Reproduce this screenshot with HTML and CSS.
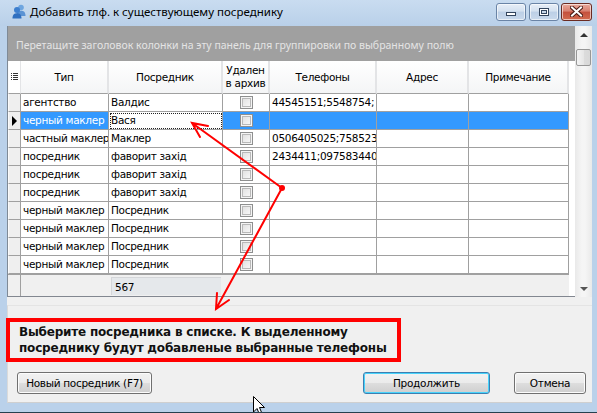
FILE: index.html
```html
<!DOCTYPE html>
<html lang="ru">
  <head>
    <meta charset="UTF-8" />
    <title>Добавить тлф. к существующему посреднику</title>
    <link rel="stylesheet" href="styles.css">
  </head>
  <body>
    <div class="window">
      <div class="titlebar">
        <svg class="title-icon" width="14" height="15" viewBox="0 0 14 15">
          <circle cx="9" cy="3.5" r="2.8" fill="#6fa6e0" />
          <path d="M4.5 12 C4.5 8 6.5 6.8 9 6.8 C11.5 6.8 13.5 8 13.5 12 Z" fill="#5b93d4" />
          <circle cx="5" cy="6" r="3" fill="#3d7fcf" />
          <path d="M0.5 14.5 C0.5 10.5 2.5 9.3 5 9.3 C7.5 9.3 9.5 10.5 9.5 14.5 Z" fill="#2f6fc0" />
        </svg>
        <div class="title">Добавить тлф. к существующему посреднику</div>
        <div class="caption-btn">
          <span class="glyph-min"></span>
        </div>
        <div class="caption-btn">
          <span class="glyph-max"></span>
        </div>
        <div class="caption-btn close">
          <svg width="13" height="11" viewBox="0 0 13 11">
            <path d="M2 1.5 L11 9.5 M11 1.5 L2 9.5" stroke="#4a1a14" stroke-width="4" stroke-linecap="square" />
            <path d="M2 1.5 L11 9.5 M11 1.5 L2 9.5" stroke="#fff" stroke-width="2" stroke-linecap="square" />
          </svg>
        </div>
      </div>

      <div class="client">
        <div class="grid-wrap">
          <div class="grid">
            <div class="group-panel">Перетащите заголовок колонки на эту панель для группировки по выбранному полю</div>

            <div class="row head">
              <div class="cell ind">
                <svg width="7" height="8" viewBox="0 0 7 8">
                  <rect x="0" y="0" width="1" height="1" fill="#333" />
                  <rect x="2" y="0" width="5" height="1" fill="#333" />
                  <rect x="0" y="2" width="1" height="1" fill="#333" />
                  <rect x="2" y="2" width="5" height="1" fill="#333" />
                  <rect x="0" y="4" width="1" height="1" fill="#333" />
                  <rect x="2" y="4" width="5" height="1" fill="#333" />
                  <rect x="0" y="6" width="1" height="1" fill="#333" />
                  <rect x="2" y="6" width="5" height="1" fill="#333" />
                </svg>
              </div>
              <div class="cell">Тип</div>
              <div class="cell">Посредник</div>
              <div class="cell">Удален<br>в архив</div>
              <div class="cell">Телефоны</div>
              <div class="cell">Адрес</div>
              <div class="cell">Примечание</div>
            </div>

            <div class="row">
              <div class="cell ind"></div>
              <div class="cell">агентство</div>
              <div class="cell">Валдис</div>
              <div class="cell chk"><span class="box"></span></div>
              <div class="cell">44545151;5548754;</div>
              <div class="cell"></div>
              <div class="cell"></div>
            </div>
            <div class="row selected">
              <div class="cell ind"><span class="pointer"></span></div>
              <div class="cell">черный маклер</div>
              <div class="cell focus">Вася</div>
              <div class="cell chk"><span class="box"></span></div>
              <div class="cell"></div>
              <div class="cell"></div>
              <div class="cell"></div>
            </div>
            <div class="row">
              <div class="cell ind"></div>
              <div class="cell">частный маклер</div>
              <div class="cell">Маклер</div>
              <div class="cell chk"><span class="box"></span></div>
              <div class="cell">0506405025;7585234</div>
              <div class="cell"></div>
              <div class="cell"></div>
            </div>
            <div class="row">
              <div class="cell ind"></div>
              <div class="cell">посредник</div>
              <div class="cell">фаворит захід</div>
              <div class="cell chk"><span class="box"></span></div>
              <div class="cell">2434411;0975834408</div>
              <div class="cell"></div>
              <div class="cell"></div>
            </div>
            <div class="row">
              <div class="cell ind"></div>
              <div class="cell">посредник</div>
              <div class="cell">фаворит захід</div>
              <div class="cell chk"><span class="box"></span></div>
              <div class="cell"></div>
              <div class="cell"></div>
              <div class="cell"></div>
            </div>
            <div class="row">
              <div class="cell ind"></div>
              <div class="cell">посредник</div>
              <div class="cell">фаворит захід</div>
              <div class="cell chk"><span class="box"></span></div>
              <div class="cell"></div>
              <div class="cell"></div>
              <div class="cell"></div>
            </div>
            <div class="row">
              <div class="cell ind"></div>
              <div class="cell">черный маклер</div>
              <div class="cell">Посредник</div>
              <div class="cell chk"><span class="box"></span></div>
              <div class="cell"></div>
              <div class="cell"></div>
              <div class="cell"></div>
            </div>
            <div class="row">
              <div class="cell ind"></div>
              <div class="cell">черный маклер</div>
              <div class="cell">Посредник</div>
              <div class="cell chk"><span class="box"></span></div>
              <div class="cell"></div>
              <div class="cell"></div>
              <div class="cell"></div>
            </div>
            <div class="row">
              <div class="cell ind"></div>
              <div class="cell">черный маклер</div>
              <div class="cell">Посредник</div>
              <div class="cell chk"><span class="box"></span></div>
              <div class="cell"></div>
              <div class="cell"></div>
              <div class="cell"></div>
            </div>
            <div class="row">
              <div class="cell ind"></div>
              <div class="cell">черный маклер</div>
              <div class="cell">Посредник</div>
              <div class="cell chk"><span class="box"></span></div>
              <div class="cell"></div>
              <div class="cell"></div>
              <div class="cell"></div>
            </div>

            <div class="grid-foot">
              <div class="foot-ind"></div>
              <div class="foot-gap"></div>
              <div class="foot-total">567</div>
            </div>
          </div>

          <div class="vscroll">
            <div class="sb-btn"><span class="arrow-up"></span></div>
            <div class="sb-thumb"></div>
            <div class="sb-track"></div>
            <div class="sb-btn"><span class="arrow-down"></span></div>
          </div>
        </div>

        <div class="bottom-panel">
          <div class="hint">Выберите посредника в списке. К выделенному<br>посреднику будут добавленые выбранные телефоны</div>
          <div class="buttons">
            <button class="btn btn-new">Новый посредник (F7)</button>
            <div class="spacer"></div>
            <button class="btn btn-ok">Продолжить</button>
            <button class="btn btn-cancel">Отмена</button>
          </div>
        </div>
      </div>

      <!-- red callout lines -->
      <svg class="marks" width="597" height="413" viewBox="0 0 597 413">
        <g stroke="#f00" stroke-width="2" fill="none" stroke-linecap="round">
          <path d="M282 188 L192 123 M200 137 L192 123 L208 126" />
          <path d="M282 188 L216 309 M217 293 L216 309 L229 300" />
        </g>
        <circle cx="282" cy="188" r="3" fill="#f00" />
      </svg>

      <svg class="cursor" width="13" height="20" viewBox="0 0 13 20">
        <path d="M0.5 0.5 L0.5 16 L4 12.5 L6.5 18.5 L9 17.5 L6.5 11.5 L11.5 11.5 Z" fill="#fff" stroke="#000" stroke-width="1" />
      </svg>
    </div>
  </body>
</html>
```

FILE: styles.css
```css
* {
  box-sizing: border-box;
}
body {
  margin: 0;
  background: #2d6e94;
  font-family: "DejaVu Sans", sans-serif;
  font-size: 10.5px;
  letter-spacing: -0.3px;
}
.window {
  width: 597px;
  height: 413px;
  position: relative;
  overflow: hidden;
  display: flex;
  flex-direction: column;
  background: #bad1ea;
  border-bottom: 1px solid #26404f;
}

/* title bar */
.titlebar {
  height: 26px;
  display: flex;
  align-items: center;
  padding: 0 5px 3px 12px;
  background: linear-gradient(#c9dcf0, #b9d0e9);
}
.title-icon {
  margin-right: 4px;
}
.title {
  flex: 1;
  font-family: "Noto Sans", sans-serif;
  font-size: 11.5px;
  letter-spacing: 0;
  color: #000;
}
.caption-btn {
  width: 30px;
  height: 18px;
  margin-left: 3px;
  border: 1px solid #6a84a6;
  border-radius: 3px;
  background: linear-gradient(#e7eef7 0%, #d4e1f0 45%, #bccfe6 50%, #c9d9ec 100%);
  box-shadow: inset 0 0 0 1px rgba(255, 255, 255, 0.6);
  display: flex;
  align-items: center;
  justify-content: center;
}
.caption-btn:first-of-type {
  margin-left: 0;
}
.caption-btn.close {
  width: 31px;
  margin-left: 2px;
  border-color: #6b2b22;
  background: linear-gradient(#e9a99c 0%, #d88070 45%, #c4503d 50%, #d26a4f 100%);
}
.glyph-min {
  width: 10px;
  height: 4px;
  margin-top: 5px;
  background: #fff;
  border: 1px solid #33455d;
}
.glyph-max {
  width: 10px;
  height: 8px;
  border: 1px solid #33455d;
  box-shadow: inset 0 0 0 1px #fff, inset 0 0 0 2px #33455d;
  background: #c8d8ea;
}

/* client area */
.client {
  height: 377px;
  margin: 0 5px 0 7px;
  display: flex;
  flex-direction: column;
  background: #f0f0f0;
}
.grid-wrap {
  height: 271px;
  display: flex;
  border-left: 1px solid #7f8a96;
}
.grid {
  width: 567px;
  background: #fff;
  border-bottom: 1px solid #828790;
}
.group-panel {
  height: 35px;
  padding: 12px 0 0 8px;
  background: #a0a0a0;
  color: #e4e4e4;
  font-family: "Noto Sans", sans-serif;
  font-size: 10.5px;
  letter-spacing: 0;
  white-space: nowrap;
}

/* grid rows */
.row {
  display: grid;
  grid-template-columns: 13px 88px 114px 47px 107px 92px 100px;
  width: 561px;
  height: 18px;
}
.cell {
  border-right: 1px solid #a0a0a0;
  border-bottom: 1px solid #a0a0a0;
  padding-left: 2px;
  line-height: 17px;
  white-space: nowrap;
  overflow: hidden;
  color: #000;
}
.cell.ind {
  padding: 0;
  background: #efefef;
  border-left: 1px solid #fbfbfb;
  display: flex;
  align-items: center;
  justify-content: center;
}
.cell.chk {
  display: flex;
  align-items: center;
  justify-content: center;
  padding: 0;
}
.box {
  width: 13px;
  height: 13px;
  border: 1px solid #8e8f8f;
  background: linear-gradient(135deg, #dcdcdc, #fdfdfd);
  box-shadow: inset 0 0 0 1px #f4f4f4, inset 0 0 0 2px #b9b9b9;
}
.row.head {
  height: 33px;
}
.row.head .cell {
  display: flex;
  align-items: center;
  justify-content: center;
  text-align: center;
  line-height: 13px;
  padding: 0;
  background: linear-gradient(#ffffff, #f4f5f6);
  border-right: 2px solid #e3e4e6;
  border-bottom: 1px solid #a0a0a0;
}
.row.head .cell.ind {
  background: #fff;
  border-right: 1px solid #e3e4e6;
}
.row.selected .cell {
  background: #3399ff;
  color: #fff;
}
.row.selected .cell.ind {
  background: #efefef;
}
.row.selected .cell.focus {
  background: #fff;
  color: #000;
  outline: 1px dotted #222;
  outline-offset: -2px;
}
.pointer {
  width: 0;
  height: 0;
  border-top: 5px solid transparent;
  border-bottom: 5px solid transparent;
  border-left: 5px solid #000;
}

/* summary footer */
.grid-foot {
  width: 561px;
  height: 22px;
  display: flex;
  background: #f0f0f0;
  border-top: 1px solid #a0a0a0;
}
.foot-ind {
  width: 13px;
  border-right: 1px solid #a0a0a0;
}
.foot-gap {
  width: 90px;
}
.foot-total {
  width: 110px;
  margin-top: 2px;
  height: 18px;
  padding-left: 3px;
  line-height: 18px;
  background: #e5e8eb;
  border-top: 1px solid #d4d6d9;
  border-left: 1px solid #d4d6d9;
}

/* vertical scrollbar */
.vscroll {
  width: 17px;
  display: flex;
  flex-direction: column;
  background: linear-gradient(90deg, #e9e9e9, #f5f5f5 40%, #f5f5f5 60%, #e9e9e9);
}
.sb-btn {
  height: 17px;
  display: flex;
  align-items: center;
  justify-content: center;
}
.sb-thumb {
  height: 17px;
  margin: 6px 1px 0 1px;
  border: 1px solid #979797;
  border-radius: 2px;
  background: linear-gradient(90deg, #f3f3f3, #e6e6e6 50%, #dcdcdc 51%, #d8d8d8);
}
.sb-track {
  flex: 1;
}
.arrow-up,
.arrow-down {
  width: 0;
  height: 0;
  border-left: 4px solid transparent;
  border-right: 4px solid transparent;
}
.arrow-up {
  border-bottom: 4px solid #333;
}
.arrow-down {
  border-top: 4px solid #555;
}

/* bottom panel */
.bottom-panel {
  flex: 1;
  margin-top: 8px;
  border-left: 1px solid #dadada;
  border-top: 1px solid #e4e4e4;
  border-bottom: 1px solid #cfcfcf;
  padding: 12px 0 0 0;
  display: flex;
  flex-direction: column;
}
.hint {
  width: 395px;
  margin-left: -2px;
  padding: 2px 0 2px 9px;
  border: 4px solid #f00;
  font-weight: bold;
  font-size: 12px;
  letter-spacing: -0.2px;
  line-height: 16px;
  color: #111;
  white-space: nowrap;
}
.buttons {
  display: flex;
  margin-top: 10px;
  padding: 0 6px 0 9px;
}
.spacer {
  flex: 1;
}
.btn {
  height: 22px;
  padding: 0;
  font-family: "DejaVu Sans", sans-serif;
  font-size: 10.5px;
  letter-spacing: -0.3px;
  color: #000;
  border: 1px solid #707070;
  border-radius: 3px;
  background: linear-gradient(#f2f2f2 0%, #ebebeb 48%, #dddddd 52%, #cfcfcf 100%);
  box-shadow: inset 0 0 0 1px #fcfcfc;
}
.btn-new {
  width: 135px;
}
.btn-ok {
  width: 127px;
  border-color: #3c7fb1;
  box-shadow: inset 0 0 0 1px #48d3fb;
}
.btn-cancel {
  width: 72px;
  margin-left: 24px;
}

/* overlays */
.marks {
  position: absolute;
  left: 0;
  top: 0;
}
.cursor {
  position: absolute;
  left: 253px;
  top: 396px;
}
```
